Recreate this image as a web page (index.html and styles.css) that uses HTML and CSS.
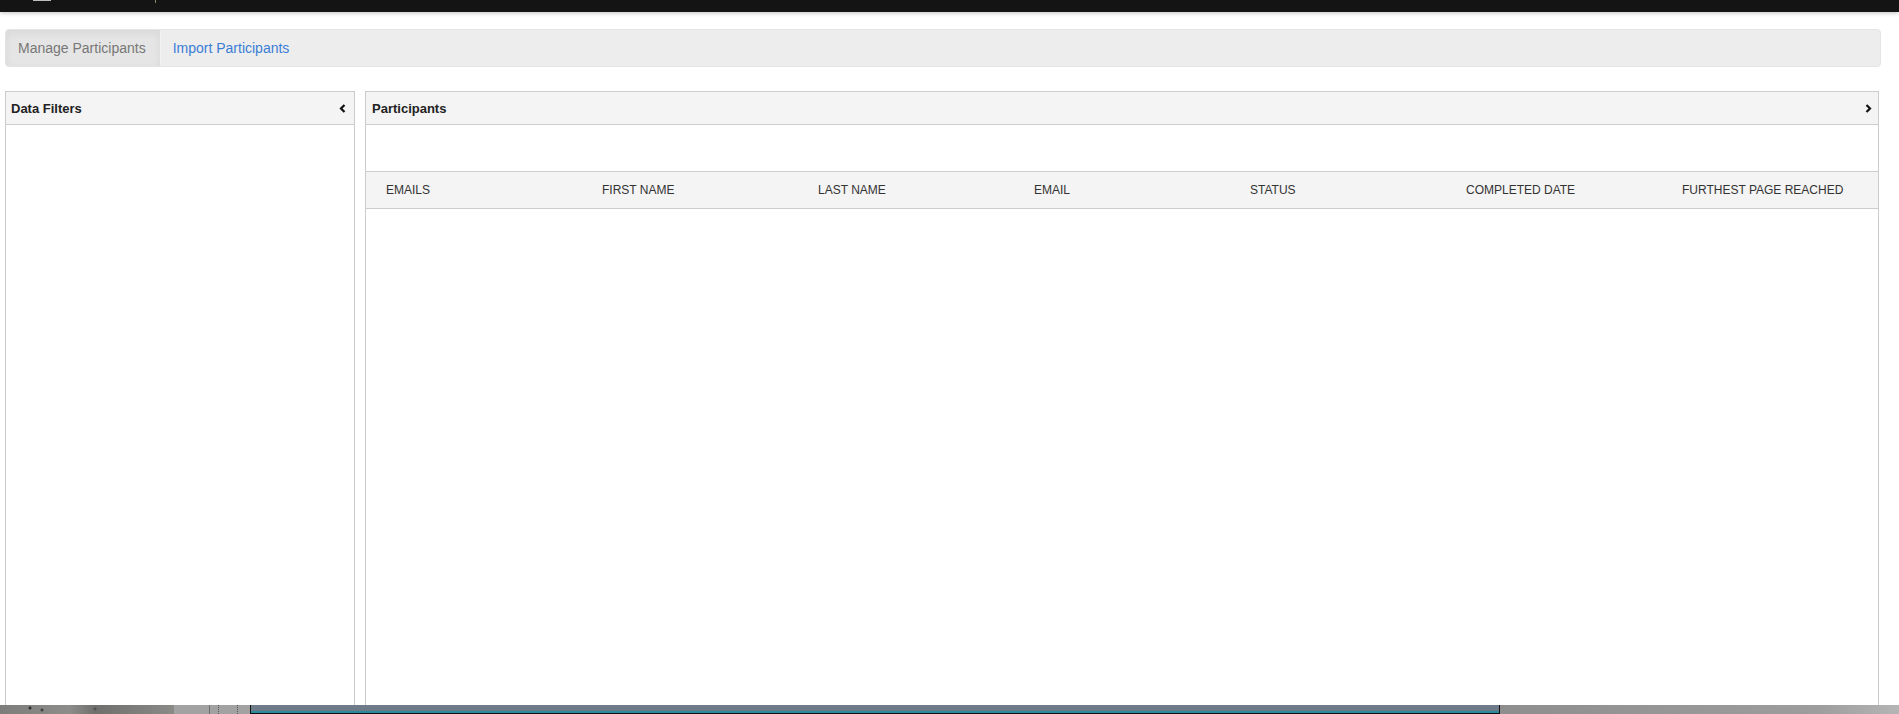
FILE: index.html
```html
<!DOCTYPE html>
<html lang="en">
<head>
<meta charset="utf-8">
<title>Manage Participants</title>
<link rel="stylesheet" href="styles.css">
</head>
<body>
<div class="topbar">
  <span class="tb-icon"></span>
  <span class="tb-tick"></span>
</div>
<main class="main">
  <nav class="tabs">
    <a class="tab active">Manage Participants</a>
    <a class="tab link">Import Participants</a>
  </nav>
  <div class="panels">
    <section class="panel filters">
      <header class="panel-head">
        <span class="panel-title">Data Filters</span>
        <svg class="chev" width="7" height="9" viewBox="0 0 7 9"><polyline points="5.5,1 2,4.5 5.5,8" fill="none" stroke="#111" stroke-width="2.2"/></svg>
      </header>
      <div class="panel-body"></div>
    </section>
    <section class="panel participants">
      <header class="panel-head">
        <span class="panel-title">Participants</span>
        <svg class="chev" width="7" height="9" viewBox="0 0 7 9"><polyline points="1.5,1 5,4.5 1.5,8" fill="none" stroke="#111" stroke-width="2.2"/></svg>
      </header>
      <div class="toolbar"></div>
      <div class="thead">
        <div class="th">EMAILS</div>
        <div class="th">FIRST NAME</div>
        <div class="th">LAST NAME</div>
        <div class="th">EMAIL</div>
        <div class="th">STATUS</div>
        <div class="th">COMPLETED DATE</div>
        <div class="th">FURTHEST PAGE REACHED</div>
      </div>
      <div class="panel-body"></div>
    </section>
  </div>
</main>
<div class="desktop">
  <div class="d-tex"></div>
  <div class="d-gray"><span class="d-line"></span><span class="d-dot a"></span><span class="d-dot b"></span></div>
  <div class="d-win"></div>
  <div class="d-rest"></div>
</div>
</body>
</html>
```

FILE: styles.css
```css
html, body {
  margin: 0;
  padding: 0;
  height: 100%;
}
body {
  display: flex;
  flex-direction: column;
  height: 714px;
  overflow: hidden;
  background: #fff;
  font-family: "Liberation Sans", Arial, Helvetica, sans-serif;
  color: #333;
}
.topbar {
  height: 12px;
  flex: 0 0 12px;
  background: #141414;
  box-shadow: 0 1px 4px rgba(0,0,0,0.25);
  display: flex;
  align-items: flex-start;
  position: relative;
  z-index: 2;
}
.tb-icon {
  width: 18px;
  height: 1px;
  margin-left: 33px;
  background: #bdbdbd;
}
.tb-tick {
  width: 1px;
  height: 3px;
  margin-left: 104px;
  background: #8b8570;
}
.main {
  flex: 1;
  display: flex;
  flex-direction: column;
  padding: 17px 20px 0 5px;
  min-height: 0;
}
.tabs {
  display: flex;
  height: 36px;
  margin-right: -2px;
  background: #ededed;
  border: 1px solid #e4e4e4;
  border-radius: 4px;
  overflow: hidden;
}
.tab {
  display: flex;
  align-items: center;
  padding: 0 14px 0 12px;
  font-size: 14px;
}
.tab.active {
  background: #e5e5e5;
  color: #777;
  box-shadow: inset 0 3px 8px rgba(0,0,0,0.06);
  border-right: 1px solid #f2f2f2;
}
.tab.link {
  color: #3b7dd6;
  padding-left: 12px;
}
.panels {
  flex: 1;
  display: flex;
  gap: 10px;
  margin-top: 24px;
  min-height: 0;
}
.panel {
  display: flex;
  flex-direction: column;
  border: 1px solid #cccccc;
  border-bottom: none;
  background: #fff;
}
.filters {
  width: 348px;
  flex: 0 0 348px;
}
.participants {
  flex: 1;
}
.panel-head {
  height: 32px;
  flex: 0 0 32px;
  display: flex;
  align-items: center;
  justify-content: space-between;
  padding: 0 8px 0 5px;
  background: #f4f4f4;
  border-bottom: 1px solid #cccccc;
}
.participants .panel-head {
  padding: 0 6px 0 6px;
}
.panel-title {
  font-size: 13px;
  font-weight: bold;
  color: #222;
}
.chev {
  display: block;
}
.panel-body {
  flex: 1;
}
.toolbar {
  height: 46px;
  flex: 0 0 46px;
}
.thead {
  display: grid;
  grid-template-columns: repeat(7, 1fr);
  height: 36px;
  flex: 0 0 36px;
  background: #f4f4f4;
  border-top: 1px solid #cccccc;
  border-bottom: 1px solid #cccccc;
}
.th {
  display: flex;
  align-items: center;
  padding-left: 20px;
  font-size: 12px;
  color: #333;
  white-space: nowrap;
}
.desktop {
  flex: 0 0 9px;
  height: 9px;
  display: flex;
  background: #999;
}
.d-tex {
  width: 174px;
  background:
    radial-gradient(circle at 30px 3px, #333 0 1px, transparent 2px),
    radial-gradient(circle at 42px 5px, #444 0 1px, transparent 2px),
    radial-gradient(circle at 95px 4px, #555 0 1px, transparent 2px),
    linear-gradient(90deg, #7d7d79, #8c8c88 40%, #6f6f6b 55%, #8a8a86);
}
.d-gray {
  width: 76px;
  display: flex;
  background: #a2a2a2;
}
.d-line {
  width: 1px;
  margin-left: 35px;
  background: #6f6f6f;
}
.d-dot {
  width: 0;
  border-left: 1px dotted #555;
}
.d-dot.a { margin-left: 8px; }
.d-dot.b { margin-left: 18px; }
.d-win {
  width: 1248px;
  background: linear-gradient(#6e7d8a, #6c7a86 70%, #2a8a9a 70%, #2a8a9a 85%, #111 85%);
  border-left: 1px solid #111;
  border-right: 1px solid #111;
}
.d-rest {
  flex: 1;
  background: linear-gradient(90deg, #8e8e8e, #9d9d9d 80%, #b5b5b5);
}
```
